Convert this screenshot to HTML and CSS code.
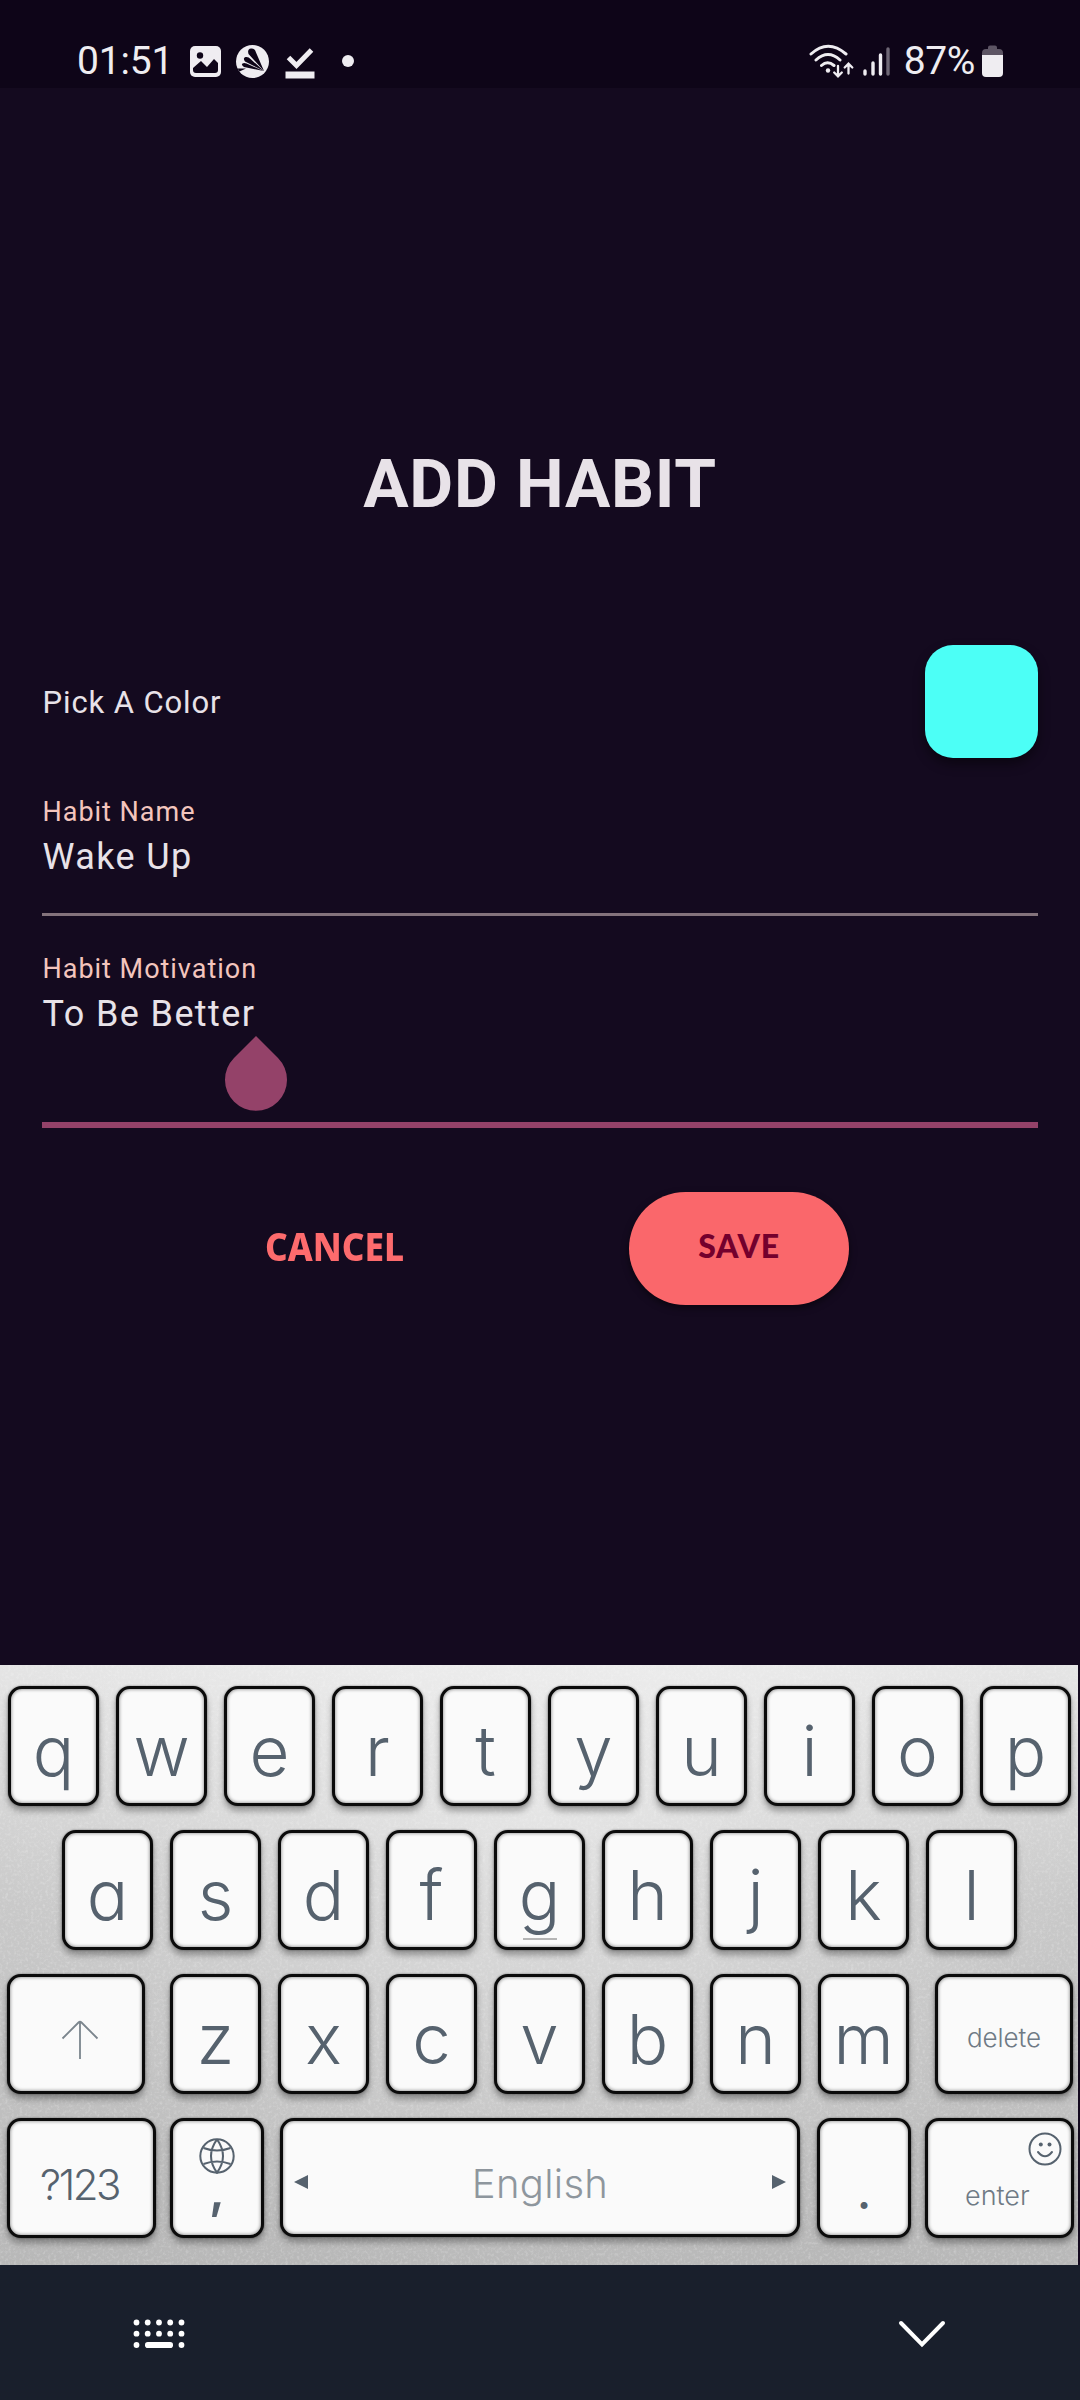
FILE: index.html
```html
<!DOCTYPE html>
<html lang="en">
<head>
<meta charset="utf-8">
<title>Add Habit</title>
<link rel="stylesheet" href="styles.css">
</head>
<body>
<header class="status">
  <span class="time">01:51</span>
  <svg class="ic-image" width="31" height="31" viewBox="0 0 31 31"><rect width="31" height="31" rx="5" fill="#efedf1"/><circle cx="10" cy="9.500" r="3.200" fill="#0e0518"/><path d="M3 22l8-7 6 6 7-8 4 4v7q0 3-3 3H6q-3 0-3-3z" fill="#0e0518"/></svg>
  <svg class="ic-disc" width="33" height="33" viewBox="0 0 33 33"><circle cx="16.500" cy="16.500" r="16.500" fill="#efedf1"/><g fill="#0e0518"><path d="M28 26L12.500 9Q11 4 15 3.500q4-.3 5 4z"/><path d="M28 26L9 16.500Q6.500 13 9.500 12q3-.5 5 2z"/><path d="M27.500 26L8 22q-3-2-1.500-3.500 1.500-1 4 0z"/><path d="M1.500 23.500l8.500 0-6.500 3z"/></g></svg>
  <svg class="ic-check" width="30" height="32" viewBox="0 0 30 32"><path d="M3.500 10.500l8 8L26.500 3" fill="none" stroke="#efedf1" stroke-width="5"/><path d="M.5 24.500h29v7H.5z" fill="#efedf1"/></svg>
  <span class="dot"></span>
  <svg class="ic-wifi" width="45" height="35" viewBox="0 0 45 35" fill="none" stroke="#efedf1" stroke-width="3" stroke-linecap="round"><path d="M2 10Q19-5.500 37 10M7 16q12-11 24 0M12.500 21.500q6-5.500 12.500 0"/><circle cx="19" cy="26.500" r="2.200" fill="#efedf1" stroke="none"/><path d="M29 22v10m-3.800-3.500L29 32.300l3.800-3.800M39.500 29.500V20m-3.800 3.500l3.800-3.800 3.800 3.800" stroke-width="2.300"/></svg>
  <svg class="ic-signal" width="28" height="31" viewBox="0 0 28 31" stroke="#efedf1" stroke-width="3.400" stroke-linecap="round"><path d="M2 25v3M10 17v11M17.500 9v19"/><path d="M25 3v25" stroke="#6e6775"/></svg>
  <span class="pct">87%</span>
  <svg class="ic-batt" width="21" height="32" viewBox="0 0 21 32"><path d="M6 4V2.500Q6 .5 8 .5h5q2 0 2 2V4h2q4 0 4 4v3H0V8q0-4 4-4z" fill="#5d5564"/><path d="M0 10h21v18q0 4-4 4H4q-4 0-4-4z" fill="#efedf1"/></svg>
</header>

<main class="form">
  <h1 class="title">ADD HABIT</h1>
  <div class="pick"><span class="pick-label">Pick A Color</span><span class="swatch"></span></div>
  <div class="field">
    <span class="label">Habit Name</span>
    <span class="value">Wake Up</span>
  </div>
  <div class="field focused">
    <span class="label">Habit Motivation</span>
    <span class="value">To Be Better</span>
    <svg class="handle" width="64" height="76" viewBox="0 0 64 76"><path d="M32 1L54 23A31 31 0 1 1 10 23Z" fill="#944269"/></svg>
  </div>
  <div class="actions">
    <span class="cancel">CANCEL</span>
    <span class="save">SAVE</span>
  </div>
</main>

<section class="keyboard">
  <svg class="grain" width="1078" height="600"><filter id="grain" x="0" y="0" width="100%" height="100%"><feTurbulence type="fractalNoise" baseFrequency=".35" numOctaves="2" seed="4"/><feColorMatrix values="0 0 0 0 1  0 0 0 0 1  0 0 0 0 1  1.600 0 0 0 -.75"/></filter><rect width="1078" height="600" filter="url(#grain)"/></svg>
  <div class="row">
    <span class="key">q</span><span class="key">w</span><span class="key">e</span><span class="key">r</span><span class="key">t</span><span class="key">y</span><span class="key">u</span><span class="key">i</span><span class="key">o</span><span class="key">p</span>
  </div>
  <div class="row row2">
    <span class="key">a</span><span class="key">s</span><span class="key">d</span><span class="key">f</span><span class="key home">g</span><span class="key">h</span><span class="key">j</span><span class="key">k</span><span class="key">l</span>
  </div>
  <div class="row row3">
    <span class="key shift"><svg width="38" height="40" viewBox="0 0 38 40" fill="none" stroke="#7b858d" stroke-width="1.800"><path d="M19 39V2M1.500 18.500L17.500 2.500q1.500-1.500 3 0L36.500 18.500"/></svg></span>
    <span class="key">z</span><span class="key">x</span><span class="key">c</span><span class="key">v</span><span class="key">b</span><span class="key">n</span><span class="key">m</span>
    <span class="key delete">delete</span>
  </div>
  <div class="row row4">
    <span class="key num">?123</span>
    <span class="key comma"><svg width="36" height="36" viewBox="0 0 36 36" fill="none" stroke="#56626e" stroke-width="2"><circle cx="18" cy="18" r="16.700"/><path d="M18 1.300Q6 18 18 34.700Q30 18 18 1.300M4.500 10Q18 15 31.500 10M4.500 26Q18 21 31.500 26"/></svg><b>,</b></span>
    <span class="key space"><i class="tri left"></i><span class="lang">English</span><i class="tri right"></i></span>
    <span class="key period">.</span>
    <span class="key enter"><svg width="34" height="34" viewBox="0 0 34 34" fill="none" stroke="#56626e" stroke-width="2"><circle cx="17" cy="17" r="15.500"/><path d="M10 20q7 8.500 14 0" stroke-linecap="round"/><circle cx="12.800" cy="12.500" r="2" fill="#56626e" stroke="none"/><circle cx="21.500" cy="12.500" r="2" fill="#56626e" stroke="none"/></svg><span>enter</span></span>
  </div>
</section>

<nav class="nav">
  <svg width="52" height="30" viewBox="0 0 52 30" fill="#fff"><g id="dots"><circle cx="3.500" cy="3.500" r="2.900"/><circle cx="14.700" cy="3.500" r="2.900"/><circle cx="26" cy="3.500" r="2.900"/><circle cx="37.200" cy="3.500" r="2.900"/><circle cx="48.500" cy="3.500" r="2.900"/></g><use href="#dots" y="11.200"/><circle cx="3.500" cy="26" r="2.900"/><rect x="12" y="23" width="28" height="6" rx="2.800"/><circle cx="48.500" cy="26" r="2.900"/></svg>
  <svg width="48" height="30" viewBox="0 0 48 30" fill="none" stroke="#fff" stroke-width="4" stroke-linecap="round"><path d="M3 4l21 21.500L45 4"/></svg>
</nav>
</body>
</html>
```
FILE: styles.css
```css
* { box-sizing: border-box; }

body {
  margin: 0;
  width: 1080px;
  height: 2400px;
  overflow: hidden;
  display: flex;
  flex-direction: column;
  background: #140a1f;
  font-family: Roboto, sans-serif;
  color: #e8e2e8;
}

/* Status bar */
.status {
  height: 88px;
  padding: 34px 77px 0;
  display: flex;
  align-items: center;
  background: #0e0518;
  color: #efedf1;
  font-size: 39px;
}
.time { width: 113px; letter-spacing: -0.200px; }
.ic-disc { margin-left: 15px; }
.ic-check { margin: 4px 0 0 16px; }
.dot { width: 12px; height: 12px; margin-left: 27px; border-radius: 50%; background: #efedf1; }
.ic-wifi { margin-left: auto; }
.ic-signal { margin-left: 9px; }
.pct { margin: 0 7px 0 13px; letter-spacing: -0.400px; }

/* Form */
.form { height: 1577px; padding: 356px 42px 0; display: flex; flex-direction: column; }
.title { margin: 0; font-size: 67.500px; line-height: 80px; font-weight: 700; text-align: center; letter-spacing: 0.700px; }
.pick { height: 113px; margin-top: 121px; display: flex; align-items: center; justify-content: space-between; }
.pick-label { font-size: 31px; line-height: 38px; letter-spacing: 0.900px; padding: 2px 0 0 0.500px; }
.swatch { width: 113px; height: 113px; border-radius: 28px; background: #4cfff6; box-shadow: 0 6px 12px rgba(0, 0, 0, .45); }
.field {
  position: relative;
  height: 158px;
  padding: 38px 0 0 0.500px;
  display: flex;
  flex-direction: column;
  border-bottom: 3px solid #84737c;
}
.label { font-size: 27px; line-height: 32px; letter-spacing: 0.980px; color: #f3c5bd; }
.value { margin-top: 7px; font-size: 36px; line-height: 44px; letter-spacing: 1.400px; }
.focused { height: 212px; padding-top: 37px; border-bottom: 6px solid #944269; }
.handle { position: absolute; left: 181.500px; top: 119px; }
.actions { margin-top: 64px; display: flex; align-items: center; }
.cancel {
  margin-left: 223px;
  width: 364px;
  padding-bottom: 7px;
  font: 800 40px "Noto Sans", sans-serif;
  color: #fd6b6d;
  transform: scaleX(.882);
  transform-origin: left;
}
.save {
  width: 220px;
  height: 113px;
  border-radius: 57px;
  background: #fa676b;
  color: #74002d;
  font: 900 32px/108px Lato, sans-serif;
  letter-spacing: 0.800px;
  text-align: center;
  box-shadow: 0 3px 7px rgba(0, 0, 0, .5);
}

/* Keyboard */
.keyboard {
  position: relative;
  width: 1078px;
  height: 600px;
  padding: 21px 4px 0 7px;
  display: flex;
  flex-direction: column;
  gap: 24px;
  background:
    radial-gradient(ellipse 50% 80% at 50% 25%, rgba(255, 255, 255, .4), rgba(255, 255, 255, 0)),
    linear-gradient(#e5e5e5, #c9c9c9 40%, #b8b8b8);
  font-family: Inter, sans-serif;
  font-feature-settings: "cv11";
  color: #56626e;
}
.grain { position: absolute; left: 0; top: 0; opacity: .35; }
.row { position: relative; height: 120px; display: flex; gap: 17px; padding-left: 1px; }
.row2 { padding-left: 55px; }
.row3, .row4 { padding-left: 0; }
.key {
  flex: none;
  width: 91px;
  height: 120px;
  border: 3px solid #0b0b0b;
  border-radius: 14px;
  background: #fafafa;
  box-shadow: inset 0 0 3px 1px #aaa, 0 0 2px rgba(0, 0, 0, .5), 0 5px 6px rgba(0, 0, 0, .32);
  font-size: 69px;
  font-weight: 300;
  line-height: 125px;
  text-align: center;
}
.home { background: linear-gradient(#b5b5b5, #b5b5b5) center 105px / 34px 2px no-repeat #fafafa; }
.shift { width: 138px; margin-right: 8px; }
.shift svg { display: block; margin: 43px auto 0 51px; }
.delete { width: 138px; margin-left: 9px; font-size: 26px; line-height: 121px; letter-spacing: -0.100px; color: #6f7a85; }
.num { width: 149px; font-size: 42px; line-height: 127px; letter-spacing: -2.500px; padding-right: 4px; }
.comma { width: 94px; margin-left: -3px; display: flex; flex-direction: column; align-items: center; padding-top: 17px; }
.comma svg { flex: none; }
.comma b { font-size: 50px; font-weight: 600; line-height: 56px; margin-top: -12px; }
.space { width: 520px; height: 119px; margin-top: 0; margin-left: -1px; display: flex; align-items: center; justify-content: space-between; padding: 8px 11px 0; }
.lang { font-size: 40px; line-height: 60px; margin-top: 4px; letter-spacing: 0.300px; color: #8e969d; }
.tri { border: 7px solid transparent; }
.left { border-right: 14px solid #56626e; border-left: 0; }
.right { border-left: 14px solid #56626e; border-right: 0; }
.period { width: 94px; font-size: 48px; font-weight: 500; line-height: 142px; }
.enter { width: 149px; margin-left: -3px; font-size: 27px; color: #6f7a85; display: flex; flex-direction: column; align-items: flex-start; }
.enter svg { margin: 11px 0 0 100px; flex: none; }
.enter span { line-height: 32px; margin: 14px 0 0 37px; }

/* System navigation */
.nav {
  height: 135px;
  padding: 54px 134px 0 133px;
  display: flex;
  justify-content: space-between;
  background: #191f2c;
}
```
